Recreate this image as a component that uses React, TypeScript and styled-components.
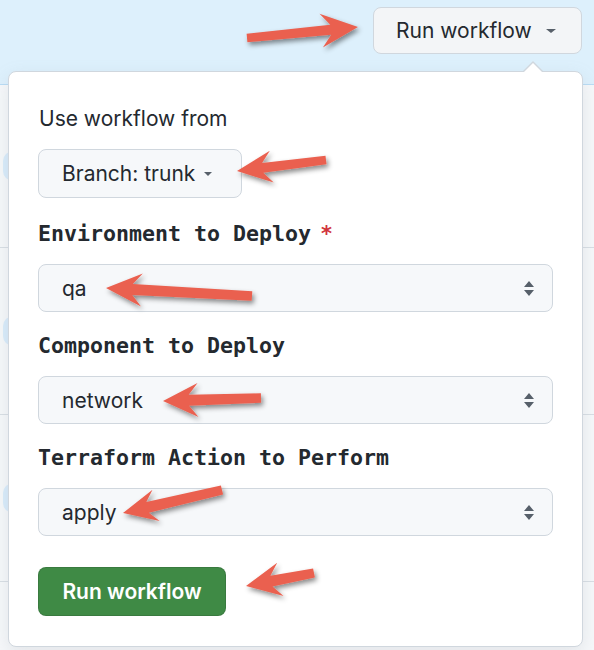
import React from "react";
import styled, { createGlobalStyle } from "styled-components";

const GlobalStyle = createGlobalStyle`
  html, body { margin: 0; padding: 0; }
  body {
    background: #f6f8fa;
    font-family: Inter, "Noto Sans", "Liberation Sans", sans-serif;
    color: #24292f;
  }
  * { box-sizing: border-box; }
`;

const Page = styled.div`
  position: relative;
  width: 594px;
  height: 650px;
  overflow: hidden;
  background: #f6f8fa;
`;

const Header = styled.header`
  height: 85px;
  background: #ddf0fc;
  border-bottom: 1px solid #b9dcf5;
  display: flex;
  justify-content: flex-end;
  align-items: flex-start;
  padding: 7px 12px 0 0;
`;

const TopButton = styled.button`
  height: 47px;
  width: 209px;
  display: flex;
  align-items: center;
  gap: 14px;
  padding: 0 0 0 22px;
  background: #f3f5f7;
  border: 1px solid #d0d7de;
  border-radius: 8px;
  font-family: Inter, "Liberation Sans", sans-serif;
  font-size: 21px;
  color: #24292f;
  cursor: pointer;
`;

const Caret = styled.span<{ $size?: number }>`
  display: inline-block;
  width: 0;
  height: 0;
  border-left: ${(p) => p.$size ?? 5}px solid transparent;
  border-right: ${(p) => p.$size ?? 5}px solid transparent;
  border-top: ${(p) => (p.$size ?? 5) - 0.5}px solid #57606a;
`;

const RowList = styled.div`
  display: flex;
  flex-direction: column;
`;

const Row = styled.div<{ $h: number }>`
  height: ${(p) => p.$h}px;
  border-bottom: 1px solid #d8dee4;
  display: flex;
  align-items: center;
  padding-left: 3px;
`;

const StatusBlob = styled.span`
  width: 30px;
  height: 30px;
  border-radius: 10px;
  background: #d9ecfb;
`;

const Popup = styled.div`
  position: absolute;
  top: 71px;
  left: 8px;
  width: 575px;
  height: 576px;
  background: #ffffff;
  border: 1px solid #d0d7de;
  border-radius: 8px;
  box-shadow: 0 6px 18px rgba(140, 149, 159, 0.18);
  padding: 33px 29px 0 29px;
  display: flex;
  flex-direction: column;
  align-items: flex-start;
`;

const PopupCaret = styled.span`
  position: absolute;
  top: -11px;
  left: 513px;
  width: 0;
  height: 0;
  border-left: 11px solid transparent;
  border-right: 11px solid transparent;
  border-bottom: 11px solid #d0d7de;
  &::after {
    content: "";
    position: absolute;
    left: -10px;
    top: 1.5px;
    border-left: 10px solid transparent;
    border-right: 10px solid transparent;
    border-bottom: 10px solid #ffffff;
  }
`;

const Title = styled.div`
  font-size: 21px;
  line-height: 28px;
  color: #24292f;
  margin: 0 0 16px 1px;
`;

const BranchButton = styled.button`
  height: 49px;
  width: 204px;
  display: flex;
  align-items: center;
  gap: 9px;
  padding: 0 0 0 23px;
  background: #f6f8fa;
  border: 1px solid #d0d7de;
  border-radius: 8px;
  font-family: Inter, "Liberation Sans", sans-serif;
  font-size: 21px;
  color: #24292f;
`;

const FieldLabel = styled.div<{ $first?: boolean }>`
  margin-top: ${(p) => (p.$first ? 22 : 20)}px;
  font-family: "DejaVu Sans Mono", "Liberation Mono", monospace;
  font-weight: bold;
  font-size: 21.6px;
  line-height: 28px;
  color: #24292f;
  display: flex;
  align-items: baseline;
  gap: 10px;
  white-space: nowrap;
`;

const Required = styled.span`
  color: #d1343c;
  font-family: "DejaVu Sans", sans-serif;
  font-weight: bold;
  font-size: 21px;
`;

const SelectBox = styled.div`
  margin-top: 16px;
  width: 515px;
  height: 48px;
  display: flex;
  align-items: center;
  justify-content: space-between;
  padding: 0 17px 0 23px;
  background: #f6f8fa;
  border: 1px solid #d0d7de;
  border-radius: 8px;
  font-size: 21px;
  color: #24292f;
`;

const SubmitButton = styled.button`
  margin-top: 31px;
  width: 188px;
  height: 49px;
  display: flex;
  align-items: center;
  justify-content: center;
  background: #3f8a45;
  border: 1px solid rgba(27, 31, 36, 0.15);
  border-radius: 8px;
  font-family: Inter, "Liberation Sans", sans-serif;
  font-weight: 600;
  font-size: 21px;
  color: #ffffff;
`;

const Annotations = styled.svg`
  position: absolute;
  inset: 0;
  width: 594px;
  height: 650px;
  pointer-events: none;
`;

const UpDown = () => (
  <svg width="12" height="17" viewBox="0 0 12 17" aria-hidden>
    <path d="M1 7 L6 1 L11 7 Z M1 10 L6 16 L11 10 Z" fill="#57606a" />
  </svg>
);

type Arrow = { t: [number, number]; h: [number, number]; len: number; half: number; shaft: number };

const arrows: Arrow[] = [
  { t: [247, 38], h: [358, 27], len: 37, half: 17, shaft: 5 },
  { t: [326, 160], h: [237, 171], len: 35, half: 16, shaft: 5 },
  { t: [252, 296], h: [106, 288], len: 36, half: 16.5, shaft: 5.5 },
  { t: [261, 398], h: [163, 401], len: 35, half: 17, shaft: 5.5 },
  { t: [222, 490], h: [123, 513], len: 34, half: 16, shaft: 5.5 },
  { t: [314, 573], h: [246, 586], len: 35, half: 17, shaft: 5.5 },
];

function arrowPoints(a: Arrow): string {
  const [tx, ty] = a.t;
  const [hx, hy] = a.h;
  const dx = hx - tx;
  const dy = hy - ty;
  const L = Math.hypot(dx, dy);
  const ux = dx / L;
  const uy = dy / L;
  const nx = -uy;
  const ny = ux;
  const neckX = hx - ux * a.len * 0.74;
  const neckY = hy - uy * a.len * 0.74;
  const barbX = hx - ux * a.len;
  const barbY = hy - uy * a.len;
  const ts = a.shaft * 0.85;
  const pts: [number, number][] = [
    [tx + nx * ts, ty + ny * ts],
    [neckX + nx * a.shaft, neckY + ny * a.shaft],
    [barbX + nx * a.half, barbY + ny * a.half],
    [hx, hy],
    [barbX - nx * a.half, barbY - ny * a.half],
    [neckX - nx * a.shaft, neckY - ny * a.shaft],
    [tx - nx * ts, ty - ny * ts],
  ];
  return pts.map((p) => `${p[0].toFixed(1)},${p[1].toFixed(1)}`).join(" ");
}

export default function App() {
  return (
    <>
      <GlobalStyle />
      <Page>
        <Header>
          <TopButton>
            Run workflow
            <Caret $size={5} />
          </TopButton>
        </Header>
        <RowList>
          <Row $h={163}>
            <StatusBlob />
          </Row>
          <Row $h={167}>
            <StatusBlob />
          </Row>
          <Row $h={167}>
            <StatusBlob />
          </Row>
          <Row $h={167} />
        </RowList>

        <Popup>
          <PopupCaret />
          <Title>Use workflow from</Title>
          <BranchButton>
            Branch: trunk
            <Caret $size={4.5} />
          </BranchButton>

          <FieldLabel $first>
            Environment to Deploy<Required>*</Required>
          </FieldLabel>
          <SelectBox>
            <span>qa</span>
            <UpDown />
          </SelectBox>

          <FieldLabel>Component to Deploy</FieldLabel>
          <SelectBox>
            <span>network</span>
            <UpDown />
          </SelectBox>

          <FieldLabel>Terraform Action to Perform</FieldLabel>
          <SelectBox>
            <span>apply</span>
            <UpDown />
          </SelectBox>

          <SubmitButton>Run workflow</SubmitButton>
        </Popup>

        <Annotations viewBox="0 0 594 650">
          <defs>
            <filter id="arrowShadow" x="-20%" y="-40%" width="140%" height="180%">
              <feDropShadow dx="2" dy="3" stdDeviation="2.5" floodColor="#000" floodOpacity="0.45" />
            </filter>
          </defs>
          {arrows.map((a, i) => (
            <polygon key={i} points={arrowPoints(a)} fill="#ea6150" filter="url(#arrowShadow)" />
          ))}
        </Annotations>
      </Page>
    </>
  );
}
